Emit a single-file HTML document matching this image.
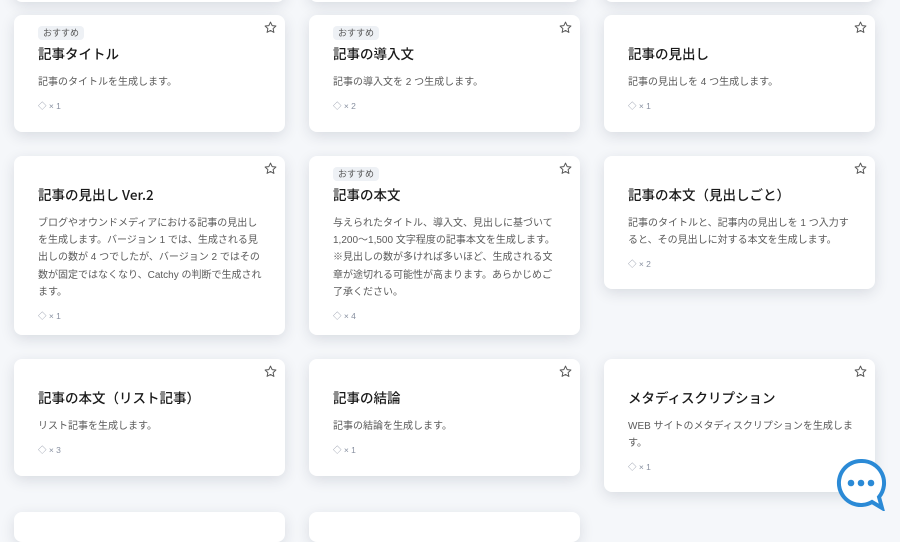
<!DOCTYPE html>
<html><head><meta charset="utf-8"><style>
body{margin:0;width:900px;height:515px;overflow:hidden;background:#f5f7fa;font-family:"Liberation Sans","Noto Sans CJK JP",sans-serif;position:relative}
.c{position:absolute;width:271px;background:#fff;border-radius:8px;box-shadow:0 4px 14px rgba(30,40,60,.13);box-sizing:border-box;padding:0 24px}
.b{position:absolute;left:24px;top:11px;background:#eef1f5;color:#555;font-size:9px;padding:2px 5px;border-radius:4px;line-height:10px}
.t{position:absolute;left:24px;top:29px;font-size:13.5px;font-weight:500;font-family:"Noto Sans CJK JP","Liberation Sans",sans-serif;color:#1a1a1a;white-space:nowrap;line-height:18px}
.d{position:absolute;left:24px;right:20px;top:59px;font-size:10px;line-height:17.2px;color:#5a5a5a}
.g{font-size:8.5px;color:#8890a0;margin-top:7px}
.s{position:absolute;right:8px;top:6px}
</style></head><body>
<div class="c" style="left:14px;top:-20px;height:22px"></div>
<div class="c" style="left:309px;top:-20px;height:22px"></div>
<div class="c" style="left:604px;top:-20px;height:22px"></div>

<div class="c" style="left:14px;top:15px;height:117px"><span class="b">おすすめ</span><div class="t">記事タイトル</div><svg class="s" width="13" height="13" viewBox="0 0 24 24"><path d="M12 2l3 6.5 7 .8-5.2 4.8 1.5 7L12 17.5 5.7 21l1.5-7L2 9.3l7-.8z" fill="none" stroke="#555" stroke-width="1.8" stroke-linejoin="round"/></svg><div class="d">記事のタイトルを生成します。<div class="g">◇ × 1</div></div></div>
<div class="c" style="left:309px;top:15px;height:117px"><span class="b">おすすめ</span><div class="t">記事の導入文</div><svg class="s" width="13" height="13" viewBox="0 0 24 24"><path d="M12 2l3 6.5 7 .8-5.2 4.8 1.5 7L12 17.5 5.7 21l1.5-7L2 9.3l7-.8z" fill="none" stroke="#555" stroke-width="1.8" stroke-linejoin="round"/></svg><div class="d">記事の導入文を 2 つ生成します。<div class="g">◇ × 2</div></div></div>
<div class="c" style="left:604px;top:15px;height:117px"><div class="t">記事の見出し</div><svg class="s" width="13" height="13" viewBox="0 0 24 24"><path d="M12 2l3 6.5 7 .8-5.2 4.8 1.5 7L12 17.5 5.7 21l1.5-7L2 9.3l7-.8z" fill="none" stroke="#555" stroke-width="1.8" stroke-linejoin="round"/></svg><div class="d">記事の見出しを 4 つ生成します。<div class="g">◇ × 1</div></div></div>

<div class="c" style="left:14px;top:156px;height:179px"><div class="t">記事の見出し Ver.2</div><svg class="s" width="13" height="13" viewBox="0 0 24 24"><path d="M12 2l3 6.5 7 .8-5.2 4.8 1.5 7L12 17.5 5.7 21l1.5-7L2 9.3l7-.8z" fill="none" stroke="#555" stroke-width="1.8" stroke-linejoin="round"/></svg><div class="d">ブログやオウンドメディアにおける記事の見出しを生成します。バージョン 1 では、生成される見出しの数が 4 つでしたが、バージョン 2 ではその数が固定ではなくなり、Catchy の判断で生成されます。<div class="g">◇ × 1</div></div></div>
<div class="c" style="left:309px;top:156px;height:179px"><span class="b">おすすめ</span><div class="t">記事の本文</div><svg class="s" width="13" height="13" viewBox="0 0 24 24"><path d="M12 2l3 6.5 7 .8-5.2 4.8 1.5 7L12 17.5 5.7 21l1.5-7L2 9.3l7-.8z" fill="none" stroke="#555" stroke-width="1.8" stroke-linejoin="round"/></svg><div class="d">与えられたタイトル、導入文、見出しに基づいて 1,200〜1,500 文字程度の記事本文を生成します。※見出しの数が多ければ多いほど、生成される文章が途切れる可能性が高まります。あらかじめご了承ください。<div class="g">◇ × 4</div></div></div>
<div class="c" style="left:604px;top:156px;height:133px"><div class="t">記事の本文（見出しごと）</div><svg class="s" width="13" height="13" viewBox="0 0 24 24"><path d="M12 2l3 6.5 7 .8-5.2 4.8 1.5 7L12 17.5 5.7 21l1.5-7L2 9.3l7-.8z" fill="none" stroke="#555" stroke-width="1.8" stroke-linejoin="round"/></svg><div class="d">記事のタイトルと、記事内の見出しを 1 つ入力すると、その見出しに対する本文を生成します。<div class="g">◇ × 2</div></div></div>

<div class="c" style="left:14px;top:359px;height:117px"><div class="t">記事の本文（リスト記事）</div><svg class="s" width="13" height="13" viewBox="0 0 24 24"><path d="M12 2l3 6.5 7 .8-5.2 4.8 1.5 7L12 17.5 5.7 21l1.5-7L2 9.3l7-.8z" fill="none" stroke="#555" stroke-width="1.8" stroke-linejoin="round"/></svg><div class="d">リスト記事を生成します。<div class="g">◇ × 3</div></div></div>
<div class="c" style="left:309px;top:359px;height:117px"><div class="t">記事の結論</div><svg class="s" width="13" height="13" viewBox="0 0 24 24"><path d="M12 2l3 6.5 7 .8-5.2 4.8 1.5 7L12 17.5 5.7 21l1.5-7L2 9.3l7-.8z" fill="none" stroke="#555" stroke-width="1.8" stroke-linejoin="round"/></svg><div class="d">記事の結論を生成します。<div class="g">◇ × 1</div></div></div>
<div class="c" style="left:604px;top:359px;height:133px"><div class="t">メタディスクリプション</div><svg class="s" width="13" height="13" viewBox="0 0 24 24"><path d="M12 2l3 6.5 7 .8-5.2 4.8 1.5 7L12 17.5 5.7 21l1.5-7L2 9.3l7-.8z" fill="none" stroke="#555" stroke-width="1.8" stroke-linejoin="round"/></svg><div class="d">WEB サイトのメタディスクリプションを生成します。<div class="g">◇ × 1</div></div></div>

<div class="c" style="left:14px;top:512px;height:30px"></div>
<div class="c" style="left:309px;top:512px;height:30px"></div>

<svg style="position:absolute;left:834px;top:457px" width="54" height="54" viewBox="0 0 54 54">
<path d="M27 4a22 22 0 1 0 11 41l10 6-3-11A22 22 0 0 0 27 4z" fill="#fff" stroke="#2b8ad6" stroke-width="4"/>
<circle cx="17" cy="26" r="3.3" fill="#2b8ad6"/><circle cx="27" cy="26" r="3.3" fill="#2b8ad6"/><circle cx="37" cy="26" r="3.3" fill="#2b8ad6"/>
</svg>
</body></html>
